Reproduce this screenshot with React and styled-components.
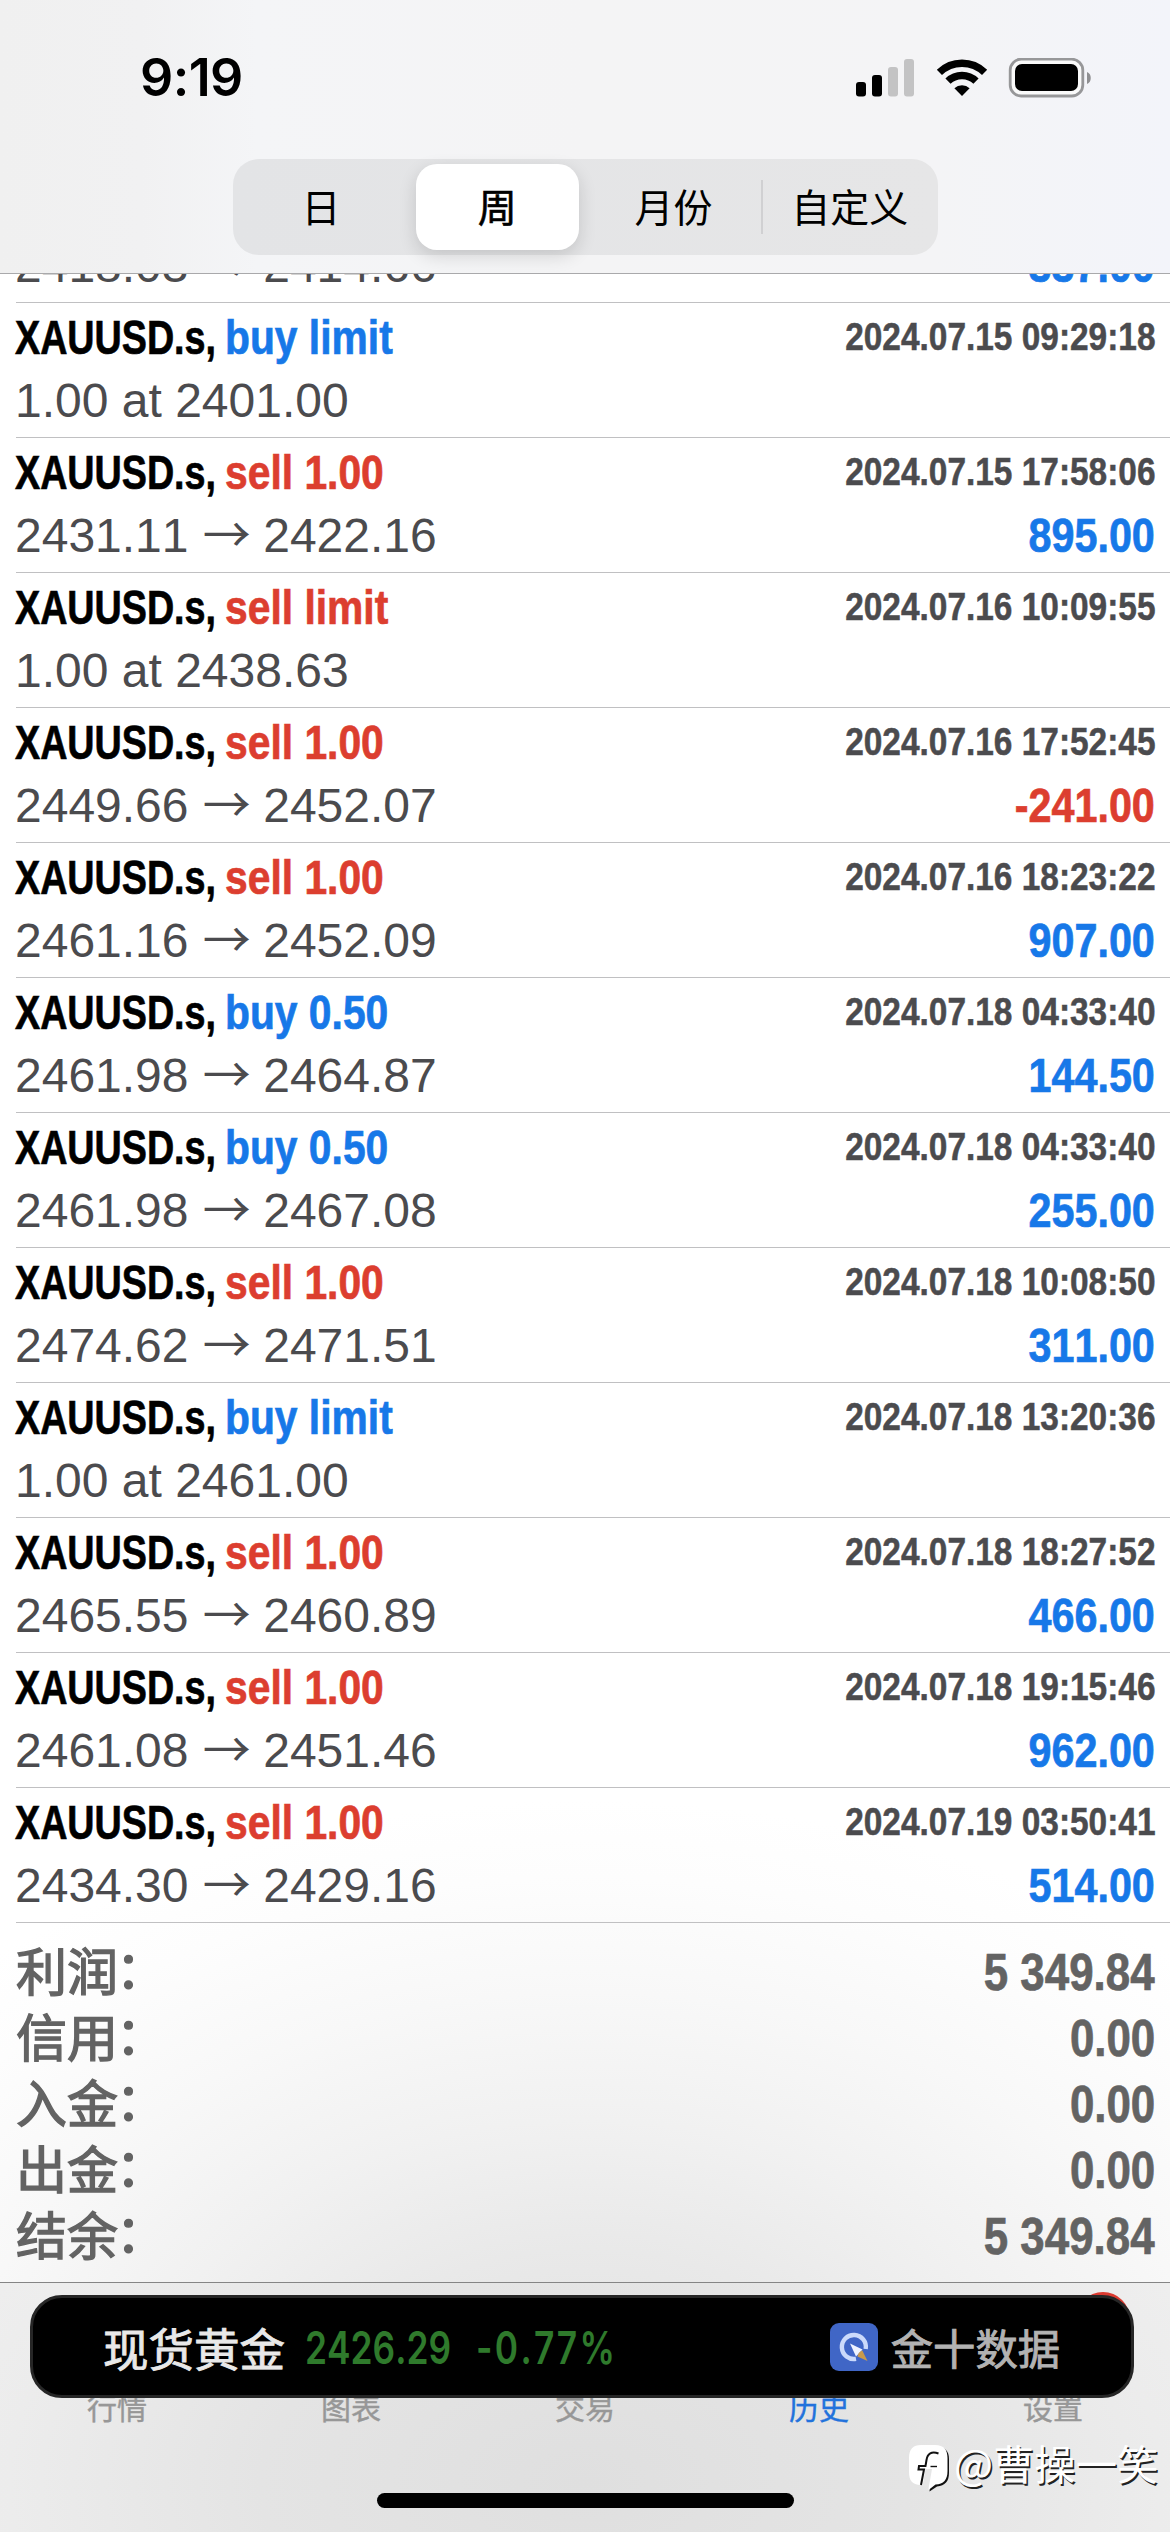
import { Fragment } from 'react';
import styled, { createGlobalStyle } from 'styled-components';

const colors = {
  blue: '#1778e8',
  red: '#dc3e2f',
  ink: '#4b4b4e',
  summary: '#636363',
};

const GlobalStyle = createGlobalStyle`
  * {
    box-sizing: border-box;
  }

  body {
    margin: 0;
    font-family: 'Liberation Sans', 'Noto Sans CJK SC', sans-serif;
    font-kerning: none;
  }
`;

const Screen = styled.div`
  position: relative;
  display: flex;
  flex-direction: column;
  width: 1170px;
  height: 2532px;
  overflow: hidden;
  background: radial-gradient(ellipse 900px 640px at 585px 2440px, #e0e0e0 0%, #e9e9e9 30%, #f1f1f1 50%, #f8f8f8 70%, #fdfdfd 88%, #ffffff 100%);
`;

const Header = styled.header`
  display: flex;
  flex-direction: column;
  flex: none;
  height: 274px;
  border-bottom: 1px solid #a9a9ab;
  background: linear-gradient(90deg, #f0f0f0 0%, #f1f1f2 12%, #f4f5f7 22%, #f4f4f5 50%, #f4f4f6 80%, #f3f4fa 100%);
`;

const StatusBar = styled.div`
  display: flex;
  justify-content: space-between;
  align-items: center;
  height: 159px;
  padding: 0 78px 3px 140px;
`;

const Clock = styled.span`
  font-family: Inter, sans-serif;
  font-size: 52px;
  font-weight: 600;
  letter-spacing: -0.6px;
  line-height: 60px;
  color: #000;
`;

const StatusIcons = styled.svg`
  display: block;
  width: 236px;
  height: 40px;
`;

const Segments = styled.div`
  display: grid;
  grid-template-columns: repeat(4, 1fr);
  width: 705px;
  height: 96px;
  margin-left: 233px;
  padding: 5px 0;
  border-radius: 26px;
  background: linear-gradient(90deg, #e3e4e6, #e6e6e7);
`;

const Segment = styled.button`
  position: relative;
  border: 0;
  margin: 0 7px;
  padding: 0 0 4px;
  border-radius: 21px;
  background: ${({ $active }) => ($active ? '#fff' : 'transparent')};
  box-shadow: ${({ $active }) => ($active ? '0 6px 18px rgba(0, 0, 0, 0.14)' : 'none')};
  font-family: 'Noto Sans CJK SC', sans-serif;
  font-size: 39px;
  line-height: 60px;
  white-space: nowrap;
  -webkit-text-stroke: ${({ $active }) => ($active ? '0.6px #000' : '0')};
  color: #000;

  &:nth-child(3)::after {
    content: '';
    position: absolute;
    right: -8px;
    top: 16px;
    width: 2px;
    height: 54px;
    background: #d0d0d2;
  }
`;

const History = styled.main`
  flex: 1;
  overflow: hidden;
  padding-left: 16px;
`;

const Deal = styled.div`
  display: flex;
  flex-direction: column;
  height: 135px;
  padding: 3px 15px 0 0;
  border-bottom: 1px solid #c0c0c2;

  &:first-child {
    margin-top: -106px;
  }
`;

const DealLine = styled.div`
  display: flex;
  justify-content: space-between;
  align-items: flex-start;
  height: 63px;
  line-height: 63px;
  white-space: nowrap;
`;

const Title = styled.div`
  display: flex;
  font-size: 48px;
  font-weight: 700;
  -webkit-text-stroke: 0.7px currentColor;
`;

const Ticker = styled.span`
  width: 210px;
  margin-left: -1px;
  transform: scaleX(0.785);
  transform-origin: left;
  color: #000;
`;

const Operation = styled.span`
  transform: scaleX(0.85);
  transform-origin: left;
  color: ${({ $side }) => ($side === 'buy' ? colors.blue : colors.red)};
`;

const Timestamp = styled.time`
  transform: scaleX(0.868);
  transform-origin: right;
  font-size: 38.5px;
  font-weight: 700;
  line-height: 62px;
  -webkit-text-stroke: 0.5px currentColor;
  color: ${colors.ink};
`;

const Prices = styled.div`
  margin-left: -1px;
  font-size: 48px;
  color: ${colors.ink};
`;

const Arrow = styled.span`
  margin: 0 -1px 0 1px;
  font-family: 'Noto Sans CJK SC', sans-serif;
  line-height: 1;
`;

const Profit = styled.span`
  transform: scaleX(0.86);
  transform-origin: right;
  font-size: 48px;
  font-weight: 700;
  -webkit-text-stroke: 0.7px currentColor;
  color: ${({ $loss }) => ($loss ? colors.red : colors.blue)};
`;

const Summary = styled.section`
  display: flex;
  flex-direction: column;
  padding: 15px 15px 0 0;
`;

const SummaryRow = styled.div`
  display: flex;
  justify-content: space-between;
  height: 66px;
  color: ${colors.summary};
`;

const SummaryLabel = styled.span`
  font-family: 'Noto Sans CJK SC', sans-serif;
  font-size: 51px;
  line-height: 63px;
  -webkit-text-stroke: 1.4px currentColor;
`;

/* the Japanese face centres the full-width colon on the line */
const Colon = styled.span`
  margin-left: -15px;
  font-family: 'Noto Sans CJK JP', sans-serif;
`;

const SummaryValue = styled.span`
  transform: scaleX(0.86);
  transform-origin: right;
  font-size: 51px;
  font-weight: 700;
  line-height: 69px;
  -webkit-text-stroke: 0.7px currentColor;
`;

const TabBar = styled.nav`
  position: relative;
  display: grid;
  grid-template-columns: repeat(5, 1fr);
  flex: none;
  height: 250px;
  padding-top: 100px;
  border-top: 1px solid #858585;
  background: radial-gradient(ellipse 720px 420px at 585px 200px, #dfdfdf 0%, #e4e4e4 45%, #ececec 80%, #efefef 100%);
`;

const Tab = styled.a`
  font-family: 'Noto Sans CJK SC', sans-serif;
  font-size: 30px;
  line-height: 46px;
  text-align: center;
  -webkit-text-stroke: 0.4px currentColor;
  color: ${({ $active }) => ($active ? '#2272dc' : '#979797')};
`;

const Badge = styled.span`
  position: absolute;
  left: 1076px;
  top: 9px;
  width: 54px;
  height: 54px;
  border-radius: 50%;
  background: #dc3a30;
`;

const Ticket = styled.aside`
  position: absolute;
  left: 30px;
  top: 2295px;
  display: flex;
  align-items: center;
  width: 1104px;
  height: 103px;
  padding: 0 71px 0 70px;
  border: 3px solid #262626;
  border-radius: 32px;
  background: #000;
  white-space: nowrap;
  font-family: 'Noto Sans CJK SC', sans-serif;
`;

const Asset = styled.span`
  width: 202px;
  font-size: 45.5px;
  line-height: 60px;
  -webkit-text-stroke: 0.9px currentColor;
  color: #e8e8e8;
`;

const Quote = styled.span`
  width: ${({ $width }) => $width}px;
  padding-top: 3px;
  transform: scaleX(0.785);
  transform-origin: left;
  font-family: Inter, sans-serif;
  font-size: 45px;
  font-weight: 600;
  letter-spacing: ${({ $spacing }) => $spacing || 0}px;
  line-height: 60px;
  color: #2f7a2c;
`;

const Source = styled.span`
  display: flex;
  align-items: center;
  gap: 13px;
  margin-left: auto;
  font-size: 42.3px;
  line-height: 60px;
  -webkit-text-stroke: 0.9px currentColor;
  color: #b2b2b2;
`;

const SourceLogo = styled.svg`
  width: 48px;
  height: 48px;
`;

const HomeIndicator = styled.div`
  position: absolute;
  left: 377px;
  bottom: 24px;
  width: 417px;
  height: 15px;
  border-radius: 8px;
  background: #000;
`;

const Watermark = styled.div`
  position: absolute;
  left: 908px;
  top: 2433px;
  display: flex;
  align-items: center;
  gap: 4px;
  height: 58px;
  font-family: 'Noto Sans CJK SC', sans-serif;
  font-size: 41.3px;
  line-height: 58px;
  color: #fff;
  text-shadow: 1.5px 1.5px 0 #222;
  white-space: nowrap;
`;

const WatermarkLogo = styled.svg`
  width: 42px;
  height: 48px;
  margin-top: 12px;
`;

const segments = ['日', '周', '月份', '自定义'];

const deals = [
  { op: 'sell 1.00', time: '2024.07.15 08:41:12', open: '2418.03', close: '2414.66', profit: '337.00' },
  { op: 'buy limit', time: '2024.07.15 09:29:18', pending: '1.00 at 2401.00' },
  { op: 'sell 1.00', time: '2024.07.15 17:58:06', open: '2431.11', close: '2422.16', profit: '895.00' },
  { op: 'sell limit', time: '2024.07.16 10:09:55', pending: '1.00 at 2438.63' },
  { op: 'sell 1.00', time: '2024.07.16 17:52:45', open: '2449.66', close: '2452.07', profit: '-241.00' },
  { op: 'sell 1.00', time: '2024.07.16 18:23:22', open: '2461.16', close: '2452.09', profit: '907.00' },
  { op: 'buy 0.50', time: '2024.07.18 04:33:40', open: '2461.98', close: '2464.87', profit: '144.50' },
  { op: 'buy 0.50', time: '2024.07.18 04:33:40', open: '2461.98', close: '2467.08', profit: '255.00' },
  { op: 'sell 1.00', time: '2024.07.18 10:08:50', open: '2474.62', close: '2471.51', profit: '311.00' },
  { op: 'buy limit', time: '2024.07.18 13:20:36', pending: '1.00 at 2461.00' },
  { op: 'sell 1.00', time: '2024.07.18 18:27:52', open: '2465.55', close: '2460.89', profit: '466.00' },
  { op: 'sell 1.00', time: '2024.07.18 19:15:46', open: '2461.08', close: '2451.46', profit: '962.00' },
  { op: 'sell 1.00', time: '2024.07.19 03:50:41', open: '2434.30', close: '2429.16', profit: '514.00' },
];

const totals = [
  ['利润', '5 349.84'],
  ['信用', '0.00'],
  ['入金', '0.00'],
  ['出金', '0.00'],
  ['结余', '5 349.84'],
];

const tabs = ['行情', '图表', '交易', '历史', '设置'];

const App = () => {
  return (
    <Screen>
      <GlobalStyle />

      <Header>
        <StatusBar>
          <Clock>9:19</Clock>
          <StatusIcons viewBox="856 58 236 40">
            {/* signal */}
            <rect x="856" y="82" width="10" height="14.5" rx="3" />
            <rect x="872" y="75" width="10" height="21.5" rx="3" />
            <rect x="888" y="67" width="10" height="29.5" rx="3" fill="#c3c3c4" />
            <rect x="904" y="59" width="10" height="37.5" rx="3" fill="#c3c3c4" />
            {/* wifi */}
            <g fill="none" stroke="#000" strokeWidth="7.4">
              <path d="M939.4 72.4a32.4 32.4 0 0 1 45.2 0" />
              <path d="M948 81.2a20 20 0 0 1 28 0" />
            </g>
            <path d="M962 96l-7.6-7.8a11 11 0 0 1 15.2 0z" />
            {/* battery */}
            <rect x="1010.2" y="59.2" width="72.6" height="36.8" rx="11" fill="#fafafa" stroke="#979799" strokeWidth="2.8" />
            <rect x="1015" y="64" width="63" height="27" rx="7" />
            <path d="M1087 72c5 1.600 5 10.400 0 12z" fill="#8f8f91" />
          </StatusIcons>
        </StatusBar>
        <Segments>
          {segments.map((label) => (
            <Segment key={label} $active={label === '周'}>
              {label}
            </Segment>
          ))}
        </Segments>
      </Header>

      <History>
        {deals.map((deal, index) => (
          <Deal key={index}>
            <DealLine>
              <Title>
                <Ticker>XAUUSD.s,</Ticker>
                <Operation $side={deal.op.split(' ')[0]}>{deal.op}</Operation>
              </Title>
              <Timestamp>{deal.time}</Timestamp>
            </DealLine>
            <DealLine>
              <Prices>
                {deal.pending || (
                  <Fragment>
                    {deal.open} <Arrow>→</Arrow> {deal.close}
                  </Fragment>
                )}
              </Prices>
              {deal.profit && <Profit $loss={deal.profit.startsWith('-')}>{deal.profit}</Profit>}
            </DealLine>
          </Deal>
        ))}

        <Summary>
          {totals.map(([label, value]) => (
            <SummaryRow key={label}>
              <SummaryLabel>
                {label}
                <Colon lang="ja">：</Colon>
              </SummaryLabel>
              <SummaryValue>{value}</SummaryValue>
            </SummaryRow>
          ))}
        </Summary>
      </History>

      <TabBar>
        {tabs.map((label) => (
          <Tab key={label} $active={label === '历史'}>
            {label}
          </Tab>
        ))}
        <Badge />
      </TabBar>

      <Ticket>
        <Asset>现货黄金</Asset>
        <Quote $width={171}>2426.29</Quote>
        <Quote $width={140} $spacing={3}>
          -0.77%
        </Quote>
        <Source>
          <SourceLogo viewBox="0 0 48 48">
            <rect width="48" height="48" rx="9" fill="#4066c6" />
            <path d="M35.700 26a12 12 0 1 0-9.700 9.800" fill="none" stroke="#cbdafb" strokeWidth="4.400" />
            <path d="M20 20.500l12.500 6-6.500 7z" fill="#eef3ff" />
            <path d="M32.300 27.500l5.200 10.500-10-4.500c.5-3 2-5 4.800-6z" fill="#c89a4c" />
          </SourceLogo>
          金十数据
        </Source>
      </Ticket>

      <HomeIndicator />

      <Watermark>
        <WatermarkLogo viewBox="0 0 42 48">
          {/* bubble with a shadow on its right and lower edges */}
          <path
            d="M29 3c8 0 12 4 12 12v14c0 8-4 13-12 13.500L21.500 47.500l.5-6 5-2 12-10V12z"
            fill="#111"
          />
          <path
            d="M13 1h14c9 0 12.500 5 12.500 13v13c0 9-4 13-12 13.500L20.500 46l.5-5h-8C4 41 1 36 1 28V14C1 5 5 1 13 1z"
            fill="#fff"
          />
          <path d="M14.500 42l3-17h6.500l-3 17z" fill="#e6e6e6" />
          <path d="M30.500 9.500c-7-2.500-11 0-12 6.500l-1 6h-6.500l-.5 3.500h5.500L13 41" fill="none" stroke="#111" strokeWidth="2" />
          <path d="M22.500 22.500h6.500" fill="none" stroke="#111" strokeWidth="1.400" />
        </WatermarkLogo>
        @曹操一笑
      </Watermark>
    </Screen>
  );
};

export default App;
